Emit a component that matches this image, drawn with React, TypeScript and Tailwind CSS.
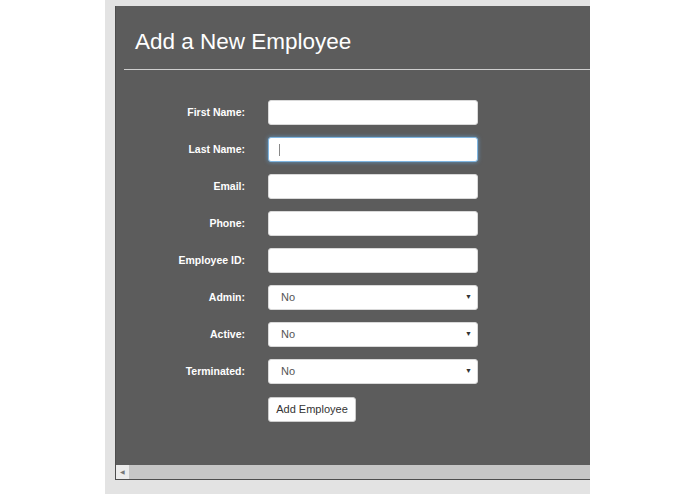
const fields = ["First Name:", "Last Name:", "Email:", "Phone:", "Employee ID:"];
const selects = ["Admin:", "Active:", "Terminated:"];

export default function App() {
  return (
    <div className="h-[494px] w-[695px] overflow-hidden bg-white font-['Liberation_Sans',Arial,sans-serif]">
      <div className="ml-[105px] flex h-full w-[485px] flex-col bg-[#e3e3e3] pl-[10px] pt-[6px]">
        <div className="flex h-[474px] w-[475px] flex-col border-b border-l border-[#4d4d4d] bg-[#5c5c5c]">
          {/* Header */}
          <h1 className="pl-[19px] pt-[23px] text-[22.5px] leading-[26px] text-white">Add a New Employee</h1>
          <div className="ml-[8px] mt-[14px] h-px bg-[#cfcfcf]" />

          {/* Form */}
          <form className="mt-[30px] flex flex-col gap-[12px]">
            {fields.map((label, i) => (
              <Row key={label} label={label}>
                <div
                  className={
                    i === 1
                      ? "relative h-[25px] w-[210px] rounded-[3px] border border-[#7fb6e2] bg-white shadow-[0_0_4px_rgba(102,175,233,0.7)]"
                      : "h-[25px] w-[210px] rounded-[3px] border border-[#d9d9d9] bg-white"
                  }
                >
                  {i === 1 && <span className="absolute left-[10px] top-[6px] h-[12px] w-px bg-[#888]" />}
                </div>
              </Row>
            ))}
            {selects.map((label) => (
              <Row key={label} label={label}>
                <div className="flex h-[25px] w-[210px] items-center justify-between rounded-[3px] border border-[#d9d9d9] bg-white pl-[12px] pr-[5px] text-[11px] text-[#555]">
                  <span>No</span>
                  <span className="text-[7px] text-[#333]">▼</span>
                </div>
              </Row>
            ))}
            <Row label="">
              <button
                type="button"
                className="-mt-px h-[25px] w-[88px] rounded-[3px] border border-[#ccc] bg-white text-[11px] text-[#333]"
              >
                Add Employee
              </button>
            </Row>
          </form>

          <div className="flex-1" />

          {/* Horizontal scrollbar */}
          <div className="flex h-[14px] bg-[#c6c6c6]">
            <div className="flex w-[13px] items-center justify-center bg-[#ececec] text-[6px] text-[#777]">◀</div>
          </div>
        </div>
      </div>
    </div>
  );
}

function Row({ label, children }: { label: string; children: React.ReactNode }) {
  return (
    <div className="flex items-center">
      <label className="w-[129px] text-right text-[10.5px] font-bold text-white">{label}</label>
      <div className="ml-[23px]">{children}</div>
    </div>
  );
}
